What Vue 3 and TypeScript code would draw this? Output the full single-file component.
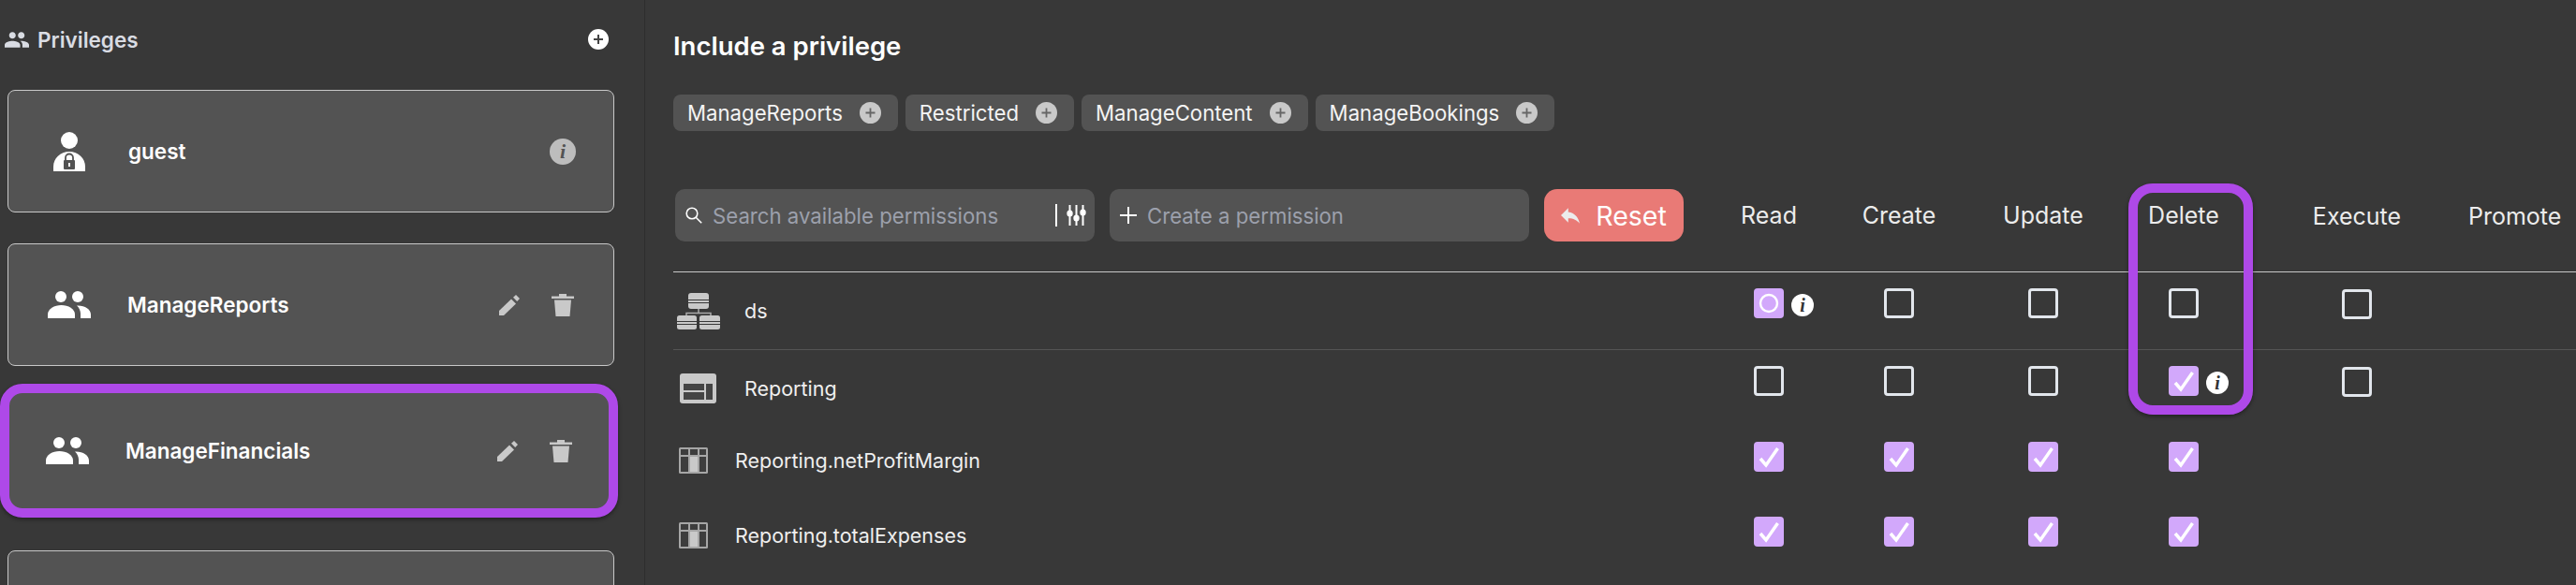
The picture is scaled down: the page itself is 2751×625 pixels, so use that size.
<script setup lang="ts">
type Perm = "off" | "on" | "partial" | null;
type ResourceRow = {
  name: string;
  kind: "ds" | "view" | "field";
  perms: Perm[];
  info?: number;
};

const columns = ["Read", "Create", "Update", "Delete", "Execute", "Promote"];
const chips = ["ManageReports", "Restricted", "ManageContent", "ManageBookings"];

const rows: ResourceRow[] = [
  { name: "ds", kind: "ds", perms: ["partial", "off", "off", "off", "off", null], info: 0 },
  { name: "Reporting", kind: "view", perms: ["off", "off", "off", "on", "off", null], info: 3 },
  { name: "Reporting.netProfitMargin", kind: "field", perms: ["on", "on", "on", "on", null, null] },
  { name: "Reporting.totalExpenses", kind: "field", perms: ["on", "on", "on", "on", null, null] },
];
</script>

<template>
  <div class="page">
    <aside class="sidebar">
      <div class="side-head">
        <div class="side-title">
          <svg class="people" viewBox="1 5 22 14" fill="currentColor">
            <path d="M16 11c1.66 0 2.99-1.34 2.99-3S17.66 5 16 5c-1.66 0-3 1.34-3 3s1.34 3 3 3zm-8 0c1.66 0 2.99-1.34 2.99-3S9.66 5 8 5C6.34 5 5 6.34 5 8s1.34 3 3 3zm0 2c-2.33 0-7 1.17-7 3.5V19h14v-2.5c0-2.33-4.67-3.5-7-3.5zm8 0c-.29 0-.62.02-.97.05 1.16.84 1.97 1.97 1.97 3.45V19h6v-2.5c0-2.33-4.67-3.5-7-3.5z" />
          </svg>
          <span>Privileges</span>
        </div>
        <svg class="add" viewBox="0 0 22 22">
          <circle cx="11" cy="11" r="11" fill="#fff" />
          <path d="M11 6v10M6 11h10" stroke="#444" stroke-width="2" />
        </svg>
      </div>

      <div class="card">
        <svg class="guest-icon" viewBox="0 0 34 42">
          <circle cx="17" cy="9" r="9" fill="#fff" />
          <path d="M0 42v-5c0-9 7.500-16 17-16s17 7 17 16v5z" fill="#fff" />
          <path d="M13 30v-2.500a4 4 0 0 1 8 0V30" fill="none" stroke="#535353" stroke-width="1.800" />
          <rect x="11" y="30" width="12" height="10" rx="1" fill="#535353" />
          <rect x="16" y="33" width="2" height="4" fill="#fff" />
        </svg>
        <span class="card-name">guest</span>
        <span class="info info--grey">i</span>
      </div>

      <div v-for="(name, i) in ['ManageReports', 'ManageFinancials']" :key="name" class="card" :class="{ 'card--selected': i === 1 }">
        <svg class="group-icon" viewBox="0 0 46 29" fill="#fff">
          <circle cx="14" cy="6" r="6" />
          <circle cx="32" cy="6" r="6" />
          <path d="M0 29v-4c0-6 7-10 14.500-10S29 19 29 25v4z" />
          <path d="M31 15.500c8-.5 15 3.500 15 9.500v4H35v-5c0-3-1.500-6.500-4-8.500z" />
        </svg>
        <span class="card-name">{{ name }}</span>
        <div class="card-actions">
          <svg class="pencil" viewBox="0 0 22 22" fill="#c9c9c9">
            <path d="M0 17 13 4.500 18 9.500 5 22H0z" />
            <path d="M15 2.800 18 0l4 4-2.800 3z" />
          </svg>
          <svg class="trash" viewBox="0 0 24 24" fill="#c9c9c9">
            <path d="M8 0h8v2.500h8V5H0V2.500h8z" />
            <path d="M3 6.500h18L19.500 24h-15z" />
          </svg>
        </div>
      </div>

      <div class="card card--cut"></div>
    </aside>

    <main class="main">
      <h2 class="main-title">Include a privilege</h2>

      <div class="chips">
        <div v-for="chip in chips" :key="chip" class="chip">
          <span>{{ chip }}</span>
          <svg class="chip-add" viewBox="0 0 23 23">
            <circle cx="11.500" cy="11.500" r="11.500" fill="#c9c9c9" />
            <path d="M11.500 6.500v10M6.500 11.500h10" stroke="#666" stroke-width="1.800" />
          </svg>
        </div>
      </div>

      <div class="grid head-row">
        <div class="toolbar">
          <div class="field field--search">
            <svg class="field-icon" viewBox="0 0 18 18" fill="none" stroke="#fff" stroke-width="1.600">
              <circle cx="7" cy="7" r="5.800" />
              <path d="m11.200 11.200 6 6" />
            </svg>
            <span class="placeholder">Search available permissions</span>
            <span class="divider"></span>
            <svg class="tune" viewBox="0 0 21 22" fill="#fff">
              <path d="M2.500 0h2v22h-2zM9.500 0h2v22h-2zM16.500 0h2v22h-2z" />
              <ellipse cx="3.500" cy="9" rx="3.200" ry="3.600" />
              <ellipse cx="10.500" cy="14" rx="3.200" ry="3.600" />
              <ellipse cx="17.500" cy="8" rx="3.200" ry="3.600" />
            </svg>
          </div>
          <div class="field field--create">
            <svg class="create-plus" viewBox="0 0 18 18" stroke="#fff" stroke-width="2">
              <path d="M9 0v18M0 9h18" />
            </svg>
            <span class="placeholder">Create a permission</span>
          </div>
          <button class="reset" type="button">
            <svg class="reset-icon" viewBox="3 5 18 15" fill="#ececec">
              <path d="M10 9V5l-7 7 7 7v-4.100c5 0 8.500 1.600 11 5.100-1-5-4-10-11-11z" />
            </svg>
            <span>Reset</span>
          </button>
        </div>
        <div v-for="col in columns" :key="col" class="col-head" :class="{ 'col-head--low': col === 'Execute' || col === 'Promote' }">{{ col }}</div>
      </div>

      <div v-for="row in rows" :key="row.name" class="grid row" :class="'row--' + row.kind">
        <div class="name-cell">
          <svg v-if="row.kind === 'ds'" class="ds-icon" viewBox="0 0 46 39">
            <path d="M23 17v5M10 25v-3.500h26V25" fill="none" stroke="#aaa" stroke-width="1.500" />
            <rect x="12" width="22" height="17" rx="3" fill="#c9c9c9" />
            <rect y="24" width="21" height="15" rx="2.500" fill="#c9c9c9" />
            <rect x="24" y="24" width="22" height="15" rx="2.500" fill="#c9c9c9" />
            <path d="M12 7.500h22M12 10.500h22M0 30.500h46M0 33.500h46" stroke="#383838" stroke-width="1.200" />
          </svg>
          <svg v-else-if="row.kind === 'view'" class="view-icon" viewBox="0 0 39 32">
            <rect width="39" height="32" rx="3" fill="#c9c9c9" />
            <path d="M4 11h22v7H4zM4 20h22v8H4zM28 11h7v17h-7z" fill="#444" />
          </svg>
          <svg v-else class="field-kind-icon" viewBox="0 0 31 28">
            <rect width="31" height="28" rx="1.500" fill="#a6a6a6" />
            <path d="M2 2h8v6H2zM12 2h8v6h-8zM22 2h7v6h-7zM2 10h8v16H2zM22 10h7v16h-7z" fill="#3d3d3d" />
            <path d="M12 10h8v16h-8z" fill="#c9c9c9" />
          </svg>
          <span>{{ row.name }}</span>
        </div>

        <div v-for="(perm, c) in row.perms" :key="c" class="perm-cell" :class="{ 'perm-cell--low': c === 4 }">
          <span v-if="perm" class="check" :class="'check--' + perm">
            <svg v-if="perm === 'on'" viewBox="0 0 32 32" fill="none" stroke="#fff" stroke-width="3.500">
              <path d="M7 18 13 25 25.500 7" />
            </svg>
            <svg v-else-if="perm === 'partial'" viewBox="0 0 32 32" fill="none" stroke="#fff" stroke-width="2.400">
              <circle cx="16" cy="16" r="9" />
            </svg>
            <span v-if="row.info === c" class="info info--badge">i</span>
          </span>
        </div>
      </div>
    </main>

    <div class="highlight"></div>
  </div>
</template>

<style>
html,
body {
  margin: 0;
  background: #383838;
}
</style>

<style scoped>
.page {
  position: relative;
  display: flex;
  width: 2751px;
  height: 625px;
  overflow: hidden;
  background: #383838;
  font-family: Inter, "Noto Sans", sans-serif;
  color: #f0f0f0;
}

.sidebar {
  flex: none;
  box-sizing: border-box;
  width: 689px;
  padding-top: 31px;
  border-right: 1px solid #2e2e2e;
}

.side-head {
  display: flex;
  align-items: center;
  justify-content: space-between;
  height: 22px;
  margin-right: 38px;
  padding-left: 5px;
  margin-bottom: 43px;
}

.side-title {
  display: flex;
  align-items: center;
  gap: 9px;
  color: #d9dce3;
  font-size: 22.5px;
  font-weight: 600;
}

.people {
  width: 26px;
  height: 17px;
}

.add {
  width: 22px;
  height: 22px;
}

.card {
  box-sizing: border-box;
  display: flex;
  align-items: center;
  width: 648px;
  height: 131px;
  margin: 0 0 33px 8px;
  padding: 0 42px 0 42px;
  border: 1px solid #c8c8c8;
  border-radius: 8px;
  background: #535353;
}

.card--selected {
  width: 660px;
  height: 143px;
  margin: -14px 0 35px 0;
  padding: 0 39px;
  border: 10px solid #ae49e8;
  border-radius: 24px;
  box-shadow: 0 2px 4px rgba(0, 0, 0, 0.4);
}

.card--cut {
  margin-bottom: 0;
}

.guest-icon {
  flex: none;
  width: 34px;
  height: 42px;
  margin: 0 46px 0 6px;
}

.group-icon {
  flex: none;
  width: 46px;
  height: 29px;
  margin-right: 39px;
}

.card-name {
  flex: 1;
  font-size: 22.5px;
  font-weight: 600;
  color: #fff;
}

.card-actions {
  display: flex;
  align-items: center;
  gap: 34px;
}

.pencil {
  width: 22px;
  height: 22px;
}

.trash {
  width: 24px;
  height: 24px;
}

.info {
  display: flex;
  align-items: center;
  justify-content: center;
  border-radius: 50%;
  font-family: "Liberation Serif", serif;
  font-style: italic;
  font-weight: 700;
}

.info--grey {
  width: 28px;
  height: 28px;
  margin-right: -2px;
  background: #bdbdbd;
  color: #535353;
  font-size: 22px;
}

.info--badge {
  position: absolute;
  top: 6px;
  left: 40px;
  width: 24px;
  height: 24px;
  background: #fff;
  color: #333;
  font-size: 20px;
}

.main {
  flex: 1;
  min-width: 0;
  padding-left: 30px;
}

.main-title {
  margin: 0;
  padding-top: 33px;
  height: 34px;
  line-height: 32px;
  font-size: 27.5px;
  font-weight: 600;
  color: #fff;
}

.chips {
  display: flex;
  gap: 8px;
  margin-top: 34px;
}

.chip {
  display: flex;
  align-items: center;
  justify-content: space-between;
  box-sizing: border-box;
  height: 39px;
  padding: 0 18px 0 15px;
  border-radius: 8px;
  background: #535353;
  font-size: 22.2px;
  color: #f4f4f4;
}

.chip-add {
  width: 23px;
  height: 23px;
  margin-left: 18px;
}

.grid {
  display: grid;
  grid-template-columns: 1101px 138px 140px 168px 132px 238px 88px 1fr;
}

.head-row {
  align-items: center;
  margin-top: 62px;
  border-bottom: 1px solid #c8c8c8;
  height: 88px;
}

.toolbar {
  display: flex;
  align-self: start;
  height: 56px;
  padding-left: 2px;
}

.field {
  box-sizing: border-box;
  display: flex;
  align-items: center;
  width: 448px;
  height: 56px;
  border-radius: 10px;
  background: #535353;
  font-size: 22.2px;
}

.field--search {
  padding-left: 11px;
  margin-right: 16px;
}

.field--create {
  padding-left: 11px;
  margin-right: 16px;
}

.field-icon {
  flex: none;
  width: 18px;
  height: 18px;
  margin-right: 11px;
}

.placeholder {
  color: #9ca0ac;
}

.divider {
  width: 2px;
  height: 24px;
  margin-left: auto;
  background: #fff;
}

.tune {
  flex: none;
  width: 21px;
  height: 22px;
  margin: 0 9px 0 10px;
}

.create-plus {
  flex: none;
  width: 18px;
  height: 18px;
  margin-right: 11px;
}

.reset {
  display: flex;
  align-items: center;
  justify-content: center;
  gap: 17px;
  flex: none;
  width: 149px;
  height: 56px;
  padding: 0;
  border: 0;
  border-radius: 14px;
  background: #e97a76;
  color: #fff;
  font: inherit;
  font-size: 28.5px;
}

.reset-icon {
  width: 20px;
  height: 17px;
}

.col-head {
  text-align: center;
  align-self: start;
  margin-top: 14px;
  font-size: 25px;
  line-height: 28px;
  color: #ececec;
}

.col-head--low {
  margin-top: 15px;
}

.row {
  align-items: start;
  height: 82px;
  font-size: 21.5px;
  color: #efefef;
}

.row--ds {
  border-bottom: 1px solid #545454;
}

.row--view {
  height: 78px;
}

.row--field {
  height: 80px;
}

.name-cell {
  display: flex;
  align-items: center;
  align-self: center;
}

.row--view .name-cell {
  padding-top: 4px;
}

.ds-icon {
  width: 46px;
  height: 39px;
  margin: 0 26px 0 4px;
}

.view-icon {
  width: 39px;
  height: 32px;
  margin: 0 30px 0 7px;
}

.field-kind-icon {
  width: 31px;
  height: 28px;
  margin: 0 29px 0 6px;
}

.perm-cell {
  display: flex;
  justify-content: center;
  padding-top: 17px;
}

.row--field .perm-cell {
  padding-top: 20px;
}

.perm-cell--low {
  margin-top: 1px;
}

.check {
  position: relative;
  box-sizing: border-box;
  display: block;
  width: 32px;
  height: 32px;
  border-radius: 4px;
}

.check svg {
  display: block;
  width: 32px;
  height: 32px;
}

.check--off {
  border: 3px solid #e2e6ec;
}

.check--on,
.check--partial {
  background: #d2a8fb;
}

.highlight {
  position: absolute;
  top: 196px;
  left: 2273px;
  box-sizing: border-box;
  width: 133px;
  height: 247px;
  border: 10px solid #ae49e8;
  border-radius: 26px;
  box-shadow: 0 2px 4px rgba(0, 0, 0, 0.4);
  pointer-events: none;
}
</style>
